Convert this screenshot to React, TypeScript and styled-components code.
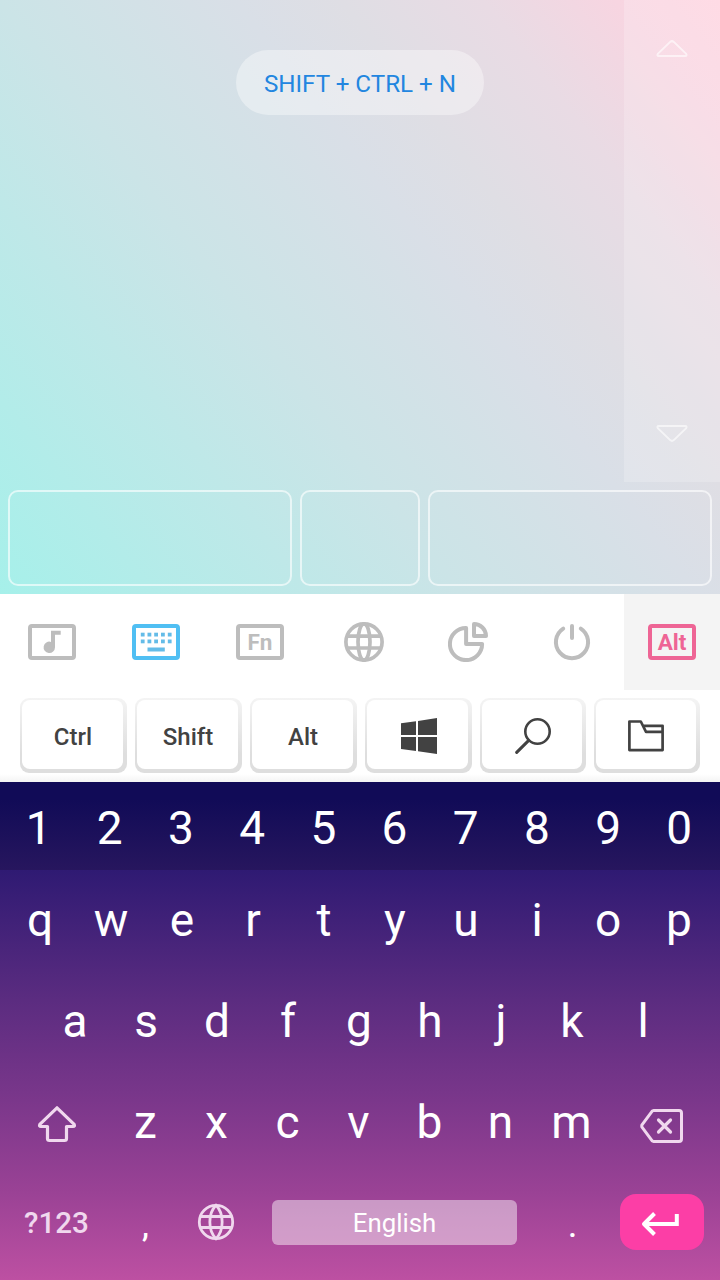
import React from "react";
import styled, { createGlobalStyle, css } from "styled-components";

const GlobalStyle = createGlobalStyle`
  * { box-sizing: border-box; }
  body { margin: 0; font-family: Roboto, "Liberation Sans", sans-serif; }
`;

const Screen = styled.main`
  width: 720px;
  height: 1280px;
  display: flex;
  flex-direction: column;
  overflow: hidden;
`;

const Touchpad = styled.section`
  height: 594px;
  display: flex;
  flex-direction: column;
  background: linear-gradient(52deg, #a6f0ea 0%, #cbe4e7 39%, #d9dfe7 59%, #dfdee4 68%, #e9dbe4 80%, #f7d5e1 91%, #ffd3df 100%);
`;

const PadArea = styled.div`
  height: 482px;
  display: flex;
`;

const PadSurface = styled.div`
  width: 624px;
  padding: 50px 0 0 236px;
`;

const Pill = styled.div`
  width: 248px;
  height: 65px;
  border-radius: 33px;
  background: rgba(255, 255, 255, 0.38);
  color: #2286e0;
  font-size: 24.2px;
  line-height: 68px;
  text-align: center;
  white-space: nowrap;
`;

const ScrollStrip = styled.div`
  width: 96px;
  padding: 38px 0 38px;
  display: flex;
  flex-direction: column;
  align-items: center;
  justify-content: space-between;
  background: rgba(255, 255, 255, 0.2);
`;

const MouseButtons = styled.div`
  height: 112px;
  padding: 8px;
  display: grid;
  grid-template-columns: 284px 120px 284px;
  gap: 8px;
`;

const MouseButton = styled.div`
  border: 2px solid rgba(255, 255, 255, 0.62);
  border-radius: 10px;
`;

const ModeBar = styled.nav`
  height: 96px;
  display: grid;
  grid-template-columns: repeat(6, 104px) 96px;
  background: #fff;
`;

const Mode = styled.div<{ $tone?: string; $filled?: boolean }>`
  display: flex;
  align-items: center;
  justify-content: center;
  color: ${(p) => p.$tone ?? "#bdbdbd"};
  background: ${(p) => (p.$filled ? "#f4f4f4" : "transparent")};
`;

const BoxLabel = styled.div`
  width: 48px;
  height: 36px;
  border: 4px solid currentColor;
  border-radius: 4px;
  font-size: 22.5px;
  font-weight: 700;
  line-height: 29px;
  text-align: center;
`;

const ModifierBar = styled.div`
  height: 92px;
  padding: 8px 20px 9px;
  display: grid;
  grid-template-columns: repeat(4, 107px) repeat(2, 106px);
  gap: 8px;
  background: linear-gradient(#fff 0 84px, #f4f4f4 92px);
`;

const ModifierKey = styled.div`
  height: 75px;
  padding: 2px 4px 4px 2px;
  border-radius: 9px;
  background: linear-gradient(#f4f4f4, #dedede 75%);
`;

const ModifierFace = styled.div<{ $drawing: boolean }>`
  height: 69px;
  display: flex;
  align-items: center;
  justify-content: center;
  border-radius: 8px;
  background: #fff;
  color: #424242;
  font-size: 24px;
  font-weight: 500;
  padding: ${(p) => (p.$drawing ? "2px 0 0 2px" : "4px 0 0 1px")};
`;

const Keyboard = styled.section`
  height: 498px;
  display: flex;
  flex-direction: column;
  background: linear-gradient(#150c5c 0, #2f1a73 88px, #5b2c80 218px, #78368a 310px, #9a4295 410px, #bd50a2 498px);
`;

const rowType = css`
  color: #fff;
  font-size: 46px;
  font-weight: 400;
`;

const NumberRow = styled.div`
  ${rowType}
  height: 88px;
  padding-left: 3px;
  display: grid;
  grid-template-columns: repeat(10, 71.2px);
  line-height: 92px;
  background: linear-gradient(#110b57 20%, #27165e);
`;

const LetterRow = styled.div<{ $h: number; $indent: number; $count: number }>`
  ${rowType}
  height: ${(p) => p.$h}px;
  padding-left: ${(p) => p.$indent}px;
  display: grid;
  grid-template-columns: repeat(${(p) => p.$count}, 71px);
  line-height: ${(p) => p.$h}px;
`;

const Key = styled.div`
  text-align: center;
`;

const ShiftRow = styled.div`
  height: 101px;
  display: flex;
`;

const SideKey = styled.div<{ $w: number; $top: number; $left: number }>`
  width: ${(p) => p.$w}px;
  padding: ${(p) => p.$top}px 0 0 ${(p) => p.$left}px;
  svg { display: block; }
`;

const BottomRow = styled.div`
  height: 107px;
  display: flex;
  align-items: flex-start;
  padding-top: 21px;
`;

const SymbolsKey = styled.div`
  width: 113px;
  color: #f0d8ee;
  font-size: 29.6px;
  font-weight: 500;
  line-height: 58px;
  text-align: center;
`;

const PunctuationKey = styled.div<{ $w: number; $shift?: number }>`
  width: ${(p) => p.$w}px;
  padding-left: ${(p) => p.$shift ?? 0}px;
  color: #fff;
  font-size: 31px;
  font-weight: 500;
  line-height: 66px;
  text-align: center;
`;

const LanguageKey = styled.div`
  width: 94px;
  padding: 8px 0 0 18px;
`;

const SpaceBar = styled.div`
  width: 245px;
  height: 45px;
  margin-top: 6px;
  border-radius: 6px;
  background: rgba(255, 255, 255, 0.46);
  color: #fff;
  font-size: 25.8px;
  line-height: 47px;
  text-align: center;
`;

const EnterKey = styled.div`
  width: 84px;
  height: 56px;
  display: flex;
  align-items: center;
  justify-content: center;
  padding: 3px 4px 0 0;
  border-radius: 16px;
  background: #fc3ea6;
`;

const Triangle = ({ down = false }: { down?: boolean }) => (
  <svg width="32" height="22" viewBox="0 0 32 22" fill="none" stroke="#fff" strokeOpacity="0.6" strokeWidth="2" strokeLinejoin="round">
    <path
      transform={down ? "rotate(180 16 11)" : undefined}
      d="M14.2 3.9Q16 2.3 17.8 3.9L30 15.6Q31.4 18 29.2 18H2.8Q.6 18 2 15.6Z"
    />
  </svg>
);

const MusicIcon = () => (
  <svg width="48" height="36" viewBox="0 0 48 36">
    <rect x="2" y="2" width="44" height="32" rx="2" fill="none" stroke="currentColor" strokeWidth="4" />
    <path fill="currentColor" d="M23 6.8H32.7V10.8H27V23.3A5.7 5.7 0 1 1 23 17.9Z" />
  </svg>
);

const dotColumns = [8.8, 15.5, 22.2, 29, 35.8];

const KeyboardIcon = () => (
  <svg width="48" height="36" viewBox="0 0 48 36" fill="#64bce8">
    <rect x="2" y="2" width="44" height="32" rx="2" fill="none" stroke="currentColor" strokeWidth="4" />
    {dotColumns.map((x) => (
      <React.Fragment key={x}>
        <rect x={x} y="8.7" width="3.8" height="3.8" />
        <rect x={x} y="15.5" width="3.8" height="3.8" />
      </React.Fragment>
    ))}
    <rect x="15.5" y="23.5" width="17.3" height="4" />
  </svg>
);

const ModeGlobe = () => (
  <svg width="40" height="40" viewBox="0 0 40 40" fill="none" stroke="currentColor" strokeWidth="3.7">
    <circle cx="20" cy="20" r="18.1" />
    <ellipse cx="20" cy="20" rx="6" ry="18.1" />
    <path d="M3 14.2H37M3 26H37" />
  </svg>
);

const PieIcon = () => (
  <svg width="40" height="40" viewBox="0 0 40 40" fill="none" stroke="currentColor" strokeWidth="4" strokeLinejoin="round">
    <path d="M18.1 5.9A16.1 16.1 0 1 0 34.1 21.9H18.1Z" />
    <path d="M26 2V13.9H38A12 12 0 0 0 26 2Z" />
  </svg>
);

const PowerIcon = () => (
  <svg width="40" height="40" viewBox="0 0 40 40" fill="none" stroke="currentColor" strokeWidth="4" strokeLinecap="round">
    <path d="M20 4V16M11.2 6.6A16.1 16.1 0 1 0 28.8 6.6" />
  </svg>
);

const WindowsIcon = () => (
  <svg width="36" height="36" viewBox="0 0 36 36" fill="#424242">
    <path d="M0 5.3L15 3.2V17H0ZM17 2.9L36 0V17H17ZM0 19H15V33L0 30.9ZM17 19H36V36L17 33.3Z" />
  </svg>
);

const SearchIcon = () => (
  <svg width="36" height="36" viewBox="0 0 36 36" fill="none" stroke="#424242" strokeLinecap="round">
    <circle cx="22.5" cy="13.5" r="12.2" strokeWidth="2.6" />
    <path d="M13.5 22.6L1.7 34.4" strokeWidth="3" />
  </svg>
);

const FolderIcon = () => (
  <svg width="38" height="32" viewBox="0 0 38 32" fill="none" stroke="#424242" strokeWidth="2.7" strokeLinejoin="round">
    <path d="M1.4 1.5H12.8L18 11.8H34.6V30.1H1.4ZM15 5.8H34.6V12" />
  </svg>
);

const ShiftIcon = () => (
  <svg width="40" height="38" viewBox="0 0 40 38" fill="none" stroke="#f0d8ee" strokeWidth="3.2" strokeLinejoin="round">
    <path d="M20 2.8L2.8 19.3Q1.8 21.5 4 21.5H10.5V33.5Q10.5 35.5 12.5 35.5H27.5Q29.5 35.5 29.5 33.5V21.5H36Q38.2 21.5 37.2 19.3Z" />
  </svg>
);

const DeleteIcon = () => (
  <svg width="44" height="36" viewBox="0 0 44 36" fill="none" stroke="#f0d8ee" strokeWidth="3" strokeLinejoin="round" strokeLinecap="round">
    <path d="M13.5 2.5H39Q41.5 2.5 41.5 5V31Q41.5 33.5 39 33.5H13.5L12.2 32.9L1.8 18.8V17.2L12.2 3.1Z" />
    <path d="M18.5 12L30.5 24M30.5 12L18.5 24" strokeWidth="3.2" />
  </svg>
);

const LanguageGlobe = () => (
  <svg width="40" height="40" viewBox="0 0 40 40" fill="none" stroke="#f0d8ee" strokeWidth="2.8">
    <circle cx="20" cy="20" r="16.7" />
    <path d="M20 3.3C11.8 11.5 11.8 28.5 20 36.7C28.2 28.5 28.2 11.5 20 3.3ZM5 14.5H35M5 25.5H35" />
  </svg>
);

const EnterIcon = () => (
  <svg width="40" height="26" viewBox="0 0 40 26" fill="none" stroke="#fff" strokeWidth="4">
    <path d="M36.8 3V13H4" />
    <path d="M14.5 2.5L4 13L14.5 23.5" strokeLinejoin="round" />
  </svg>
);

const Modifier = ({ children }: { children: React.ReactNode }) => (
  <ModifierKey>
    <ModifierFace $drawing={typeof children !== "string"}>{children}</ModifierFace>
  </ModifierKey>
);

const keys = (letters: string) => letters.split("").map((c) => <Key key={c}>{c}</Key>);

export default function App() {
  return (
    <>
      <GlobalStyle />
      <Screen>
        <Touchpad>
          <PadArea>
            <PadSurface>
              <Pill>SHIFT + CTRL + N</Pill>
            </PadSurface>
            <ScrollStrip>
              <Triangle />
              <Triangle down />
            </ScrollStrip>
          </PadArea>
          <MouseButtons>
            <MouseButton />
            <MouseButton />
            <MouseButton />
          </MouseButtons>
        </Touchpad>
        <ModeBar>
          <Mode><MusicIcon /></Mode>
          <Mode $tone="#50bff3"><KeyboardIcon /></Mode>
          <Mode><BoxLabel>Fn</BoxLabel></Mode>
          <Mode><ModeGlobe /></Mode>
          <Mode><PieIcon /></Mode>
          <Mode><PowerIcon /></Mode>
          <Mode $tone="#ee6595" $filled><BoxLabel>Alt</BoxLabel></Mode>
        </ModeBar>
        <ModifierBar>
          <Modifier>Ctrl</Modifier>
          <Modifier>Shift</Modifier>
          <Modifier>Alt</Modifier>
          <Modifier><WindowsIcon /></Modifier>
          <Modifier><SearchIcon /></Modifier>
          <Modifier><FolderIcon /></Modifier>
        </ModifierBar>
        <Keyboard>
          <NumberRow>{keys("1234567890")}</NumberRow>
          <LetterRow $h={101} $indent={4.5} $count={10}>{keys("qwertyuiop")}</LetterRow>
          <LetterRow $h={101} $indent={39.5} $count={9}>{keys("asdfghjkl")}</LetterRow>
          <ShiftRow>
            <SideKey $w={110} $top={33} $left={37}><ShiftIcon /></SideKey>
            <LetterRow $h={101} $indent={0} $count={7}>{keys("zxcvbnm")}</LetterRow>
            <SideKey $w={112} $top={36} $left={33}><DeleteIcon /></SideKey>
          </ShiftRow>
          <BottomRow>
            <SymbolsKey>?123</SymbolsKey>
            <PunctuationKey $w={65}>,</PunctuationKey>
            <LanguageKey><LanguageGlobe /></LanguageKey>
            <SpaceBar>English</SpaceBar>
            <PunctuationKey $w={103} $shift={8}>.</PunctuationKey>
            <EnterKey><EnterIcon /></EnterKey>
          </BottomRow>
        </Keyboard>
      </Screen>
    </>
  );
}
